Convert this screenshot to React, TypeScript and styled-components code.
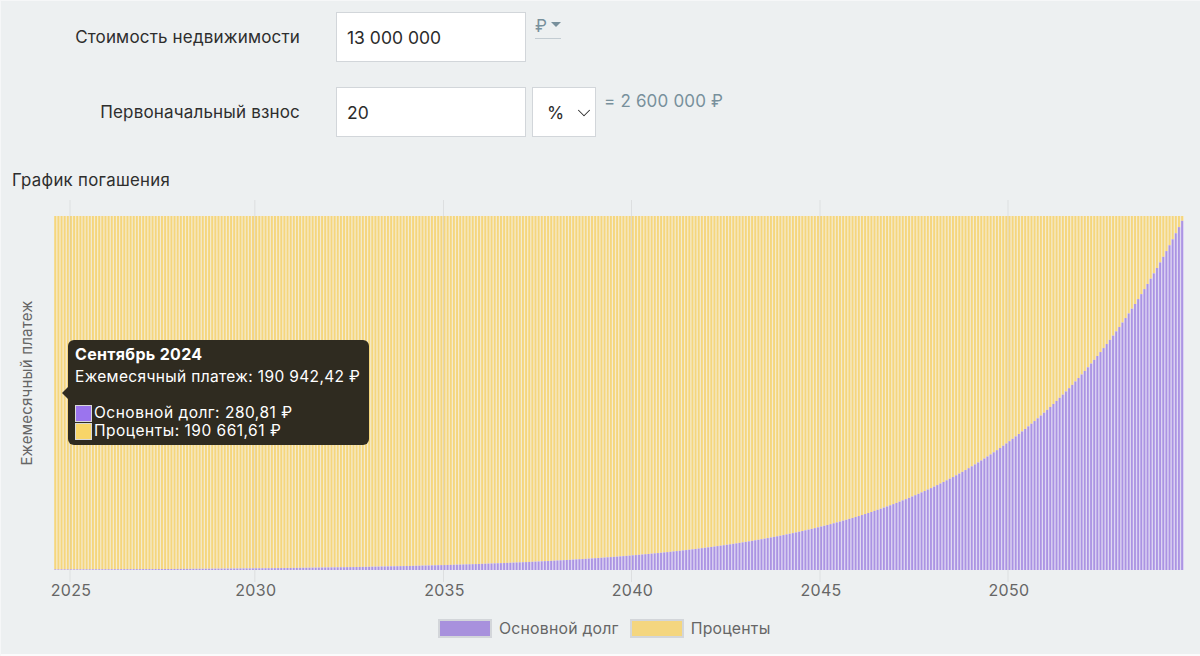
import React from "react";
import styled, { createGlobalStyle } from "styled-components";
import { ChevronDown } from "lucide-react";

const Global = createGlobalStyle`
  html, body { margin: 0; padding: 0; background: #fff; }
  * { box-sizing: border-box; }
`;

const Page = styled.div`
  width: 1200px;
  height: 656px;
  overflow: hidden;
  background: #edf0f1;
  box-shadow: inset 1px 1px 0 #f6f7f8, inset 0 -2px 0 #fbfbfc;
  font-family: Inter, "Noto Sans", sans-serif;
  color: #2b2b2b;
  padding-top: 12px;
`;

const Form = styled.div`
  display: flex;
  flex-direction: column;
  gap: 25px;
`;

const Row = styled.div`
  display: flex;
  align-items: flex-start;
  height: 50px;
`;

const Label = styled.label`
  width: 300px;
  height: 50px;
  line-height: 50px;
  text-align: right;
  font-size: 17px;
  letter-spacing: 0.17px;
  color: #2e2e2e;
  margin-right: 36px;
`;

const Field = styled.input`
  width: 190px;
  height: 50px;
  border: 1.5px solid #d2d6da;
  background: #fff;
  padding: 0 10px;
  font: 400 17.5px Inter, sans-serif;
  color: #2b2b2b;
  outline: none;
`;

const CurrencyToggle = styled.div`
  margin: 4px 0 0 9px;
  width: 26px;
  height: 23px;
  display: flex;
  gap: 4px;
  align-items: flex-start;
  border-bottom: 1px solid #c3ccd2;
  color: #78909c;
  font-size: 17px;
  line-height: 20px;
`;

const Caret = styled.span`
  margin-top: 6px;
  width: 0;
  height: 0;
  border-left: 5px solid transparent;
  border-right: 5px solid transparent;
  border-top: 5px solid #78909c;
`;

const UnitSelect = styled.div`
  width: 64px;
  height: 50px;
  margin-left: 6px;
  border: 1.5px solid #d2d6da;
  background: #fff;
  display: flex;
  align-items: center;
  justify-content: space-between;
  padding: 1px 0 0 14px;
  font-size: 17.5px;
  color: #2b2b2b;
`;

const Equivalent = styled.div`
  margin: 2px 0 0 8px;
  font-size: 17px;
  line-height: 24px;
  letter-spacing: 0.18px;
  color: #78909c;
`;

const Title = styled.h2`
  margin: 33px 0 0 12px;
  height: 26px;
  line-height: 20px;
  font-size: 16.8px;
  font-weight: 400;
  letter-spacing: 0.3px;
  color: #2e2e2e;
`;

const ChartArea = styled.div`
  position: relative;
  width: 1200px;
  height: 414px;
`;

const ChartSvg = styled.svg`
  display: block;
  font-family: Inter, sans-serif;
`;

const Tip = styled.div`
  position: absolute;
  left: 68px;
  top: 144px;
  width: 301px;
  height: 105px;
  background: #2f2b20;
  border-radius: 6px;
  padding: 5px 7px;
  color: #fff;
  font-size: 15.5px;
  line-height: 18px;
  letter-spacing: 0.35px;
  &::before {
    content: "";
    position: absolute;
    left: -6px;
    top: 47px;
    border-top: 6px solid transparent;
    border-bottom: 6px solid transparent;
    border-right: 6px solid #2f2b20;
  }
`;

const TipTitle = styled.div`
  font-weight: 700;
  font-size: 16px;
  line-height: 18px;
  letter-spacing: 0.32px;
`;

const TipLine = styled.div`
  margin-top: 5px;
  margin-bottom: 18px;
  line-height: 18px;
  white-space: nowrap;
`;

const TipItem = styled.div`
  display: flex;
  align-items: center;
  gap: 2px;
  height: 18px;
  white-space: nowrap;
  letter-spacing: 0.5px;
`;

const TipSwatch = styled.span<{ $color: string }>`
  width: 17px;
  height: 17px;
  flex: none;
  background: ${(p) => p.$color};
  border: 1px solid #d8d8d8;
`;

const Legend = styled.div`
  display: flex;
  margin-left: 438px;
  align-items: center;
  height: 18px;
  margin-top: 9px;
  font-size: 15.8px;
  letter-spacing: 0.22px;
  color: #666;
`;

const LegendKey = styled.span<{ $color: string }>`
  width: 54px;
  height: 19px;
  background: ${(p) => p.$color};
  border: 2px solid #d3d6da;
  margin-right: 7px;
`;

const LegendText = styled.span`
  margin-right: 11px;
`;

const L = 54;
const R = 1184;
const TOP = 20;
const BOTTOM = 374;
const N = 360;
const step = (R - L) / N;
const H = BOTTOM - TOP;
const ticks: [string, number][] = [
  ["2025", 70],
  ["2030", 254.8],
  ["2035", 443.5],
  ["2040", 631.5],
  ["2045", 820],
  ["2050", 1008],
];

const ratio = (i: number) => Math.min(1, 0.00147 * Math.exp(0.01813 * i));

const Chart = () => (
  <ChartSvg width={1200} height={414} viewBox="0 0 1200 414">
    {Array.from({ length: N }, (_, i) => {
      const x = L + i * step;
      const h = ratio(i) * H;
      return (
        <g key={i}>
          <rect x={x} y={TOP} width={step} height={H - h} fill="#f6ebcb" />
          <rect x={x + 0.3} y={TOP} width={1.9} height={H - h} fill="#f5d67d" />
          <rect x={x} y={BOTTOM - h} width={step} height={h} fill="#ddd5f3" />
          <rect x={x + 0.3} y={BOTTOM - h} width={1.8} height={h} fill="#ab93e3" />
        </g>
      );
    })}
    {ticks.map(([t, x]) => (
      <g key={t}>
        <line x1={x} x2={x} y1={4} y2={386} stroke="#b9b9b9" strokeOpacity={0.3} />
        <text x={x + 1} y={400} fontSize={16} fill="#666" textAnchor="middle" letterSpacing={0.3}>
          {t}
        </text>
      </g>
    ))}
    <text
      transform="translate(32 187) rotate(-90)"
      fontSize={15}
      fill="#666"
      textAnchor="middle"
      letterSpacing={0.2}
    >
      Ежемесячный платеж
    </text>
  </ChartSvg>
);

export default function App() {
  return (
    <Page>
      <Global />
      <Form>
        <Row>
          <Label>Стоимость недвижимости</Label>
          <Field defaultValue="13 000 000" />
          <CurrencyToggle>
            ₽<Caret />
          </CurrencyToggle>
        </Row>
        <Row>
          <Label>Первоначальный взнос</Label>
          <Field defaultValue="20" />
          <UnitSelect>
            %
            <ChevronDown size={22} strokeWidth={1.1} />
          </UnitSelect>
          <Equivalent>= 2 600 000 ₽</Equivalent>
        </Row>
      </Form>
      <Title>График погашения</Title>
      <ChartArea>
        <Chart />
        <Tip>
          <TipTitle>Сентябрь 2024</TipTitle>
          <TipLine>Ежемесячный платеж: 190 942,42 ₽</TipLine>
          <TipItem>
            <TipSwatch $color="#9b74ee" />
            Основной долг: 280,81 ₽
          </TipItem>
          <TipItem>
            <TipSwatch $color="#f8d568" />
            Проценты: 190 661,61 ₽
          </TipItem>
        </Tip>
      </ChartArea>
      <Legend>
        <LegendKey $color="#a891dd" />
        <LegendText>Основной долг</LegendText>
        <LegendKey $color="#f4d67f" />
        <LegendText>Проценты</LegendText>
      </Legend>
    </Page>
  );
}
